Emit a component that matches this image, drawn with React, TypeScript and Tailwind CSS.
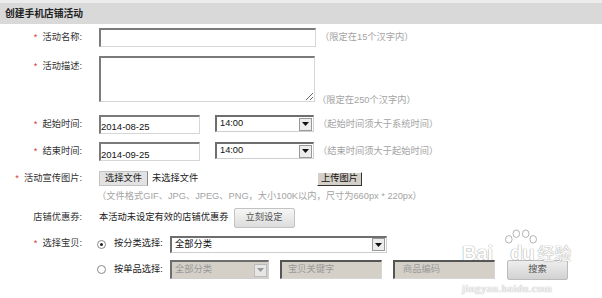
import React from 'react';

const inset =
  'border-t-2 border-l-2 border-r border-b border-t-[#7b7b7b] border-l-[#7b7b7b] border-r-[#d6d6d6] border-b-[#d6d6d6]';

const Star = () => <span className="text-[#d23a3a] mr-[5px]">*</span>;

const Arrow = ({ disabled }: { disabled?: boolean }) => (
  <span
    className={`w-[13px] h-[13px] mr-px flex items-center justify-center border ${
      disabled ? 'border-[#bbb] bg-[#e6e6e6]' : 'border-[#999] bg-[#ececec]'
    }`}
  >
    <svg width="7" height="4" viewBox="0 0 7 4">
      <path d="M0 0h7L3.5 4z" fill={disabled ? '#999' : '#111'} />
    </svg>
  </span>
);

const Select = ({ value, width, disabled }: { value: string; width: string; disabled?: boolean }) => (
  <div
    className={`flex items-center pl-[3px] ${width} ${
      disabled ? 'bg-[#d4d0c8] text-[#999] h-[19px]' : 'bg-white text-[#111] h-[17px]'
    } border-t-2 border-l-2 border-r border-b border-t-[#6e6e6e] border-l-[#6e6e6e] border-r-[#cfcfcf] border-b-[#cfcfcf]`}
  >
    <span className="flex-1 leading-none">{value}</span>
    <Arrow disabled={disabled} />
  </div>
);

const Label = ({ text, star }: { text: string; star?: boolean }) => (
  <div className="w-[82px] shrink-0 text-right text-[#333] whitespace-nowrap">
    {star && <Star />}
    {text}
  </div>
);

const Hint = ({ children }: { children: React.ReactNode }) => (
  <span className="text-[#a3a3a3] whitespace-nowrap">{children}</span>
);

const Radio = ({ checked }: { checked?: boolean }) => (
  <span className="w-[9px] h-[9px] -ml-[2px] rounded-full border border-[#888] bg-white flex items-center justify-center">
    {checked && <span className="w-[3px] h-[3px] rounded-full bg-[#222]" />}
  </span>
);

export default function App() {
  return (
    <div className="w-[602px] h-[298px] bg-white relative overflow-hidden font-['Liberation_Sans','Noto_Sans_CJK_SC',sans-serif] text-[9.25px] leading-none">
      <div className="h-[24px] bg-[#d9d9d9] border-t-[3px] border-[#ececec] flex items-center pl-[5px]">
        <span className="font-bold text-[9.75px] text-[#222]">创建手机店铺活动</span>
      </div>

      {/* 活动名称 */}
      <div className="flex items-center mt-[4px] h-[19px]">
        <Label text="活动名称:" star />
        <input readOnly className={`ml-[17px] w-[217px] h-[19px] bg-white outline-none ${inset}`} />
        <span className="ml-[4px]">
          <Hint>（限定在15个汉字内）</Hint>
        </span>
      </div>

      {/* 活动描述 */}
      <div className="flex items-start mt-[9px] h-[46px]">
        <div className="pt-[6px]">
          <Label text="活动描述:" star />
        </div>
        <textarea readOnly className={`ml-[17px] w-[216px] h-[46px] bg-white outline-none ${inset}`} />
        <span className="ml-[2px] self-end mb-[-3px]">
          <Hint>（限定在250个汉字内）</Hint>
        </span>
      </div>

      {/* 起始时间 */}
      <div className="flex items-center mt-[13px] h-[19px]">
        <Label text="起始时间:" star />
        <div className={`ml-[17px] w-[101px] h-[19px] bg-white flex items-end pb-[2px] text-[9.5px] text-[#111] ${inset}`}>
          2014-08-25
        </div>
        <div className="ml-[15px] self-start">
          <Select value="14:00" width="w-[99px]" />
        </div>
        <span className="ml-[4px]">
          <Hint>（起始时间须大于系统时间）</Hint>
        </span>
      </div>

      {/* 结束时间 */}
      <div className="flex items-center mt-[8px] h-[19px]">
        <Label text="结束时间:" star />
        <div className={`ml-[17px] w-[101px] h-[19px] bg-white flex items-end pb-[1px] text-[9.5px] text-[#111] ${inset}`}>
          2014-09-25
        </div>
        <div className="ml-[15px] self-start">
          <Select value="14:00" width="w-[99px]" />
        </div>
        <span className="ml-[4px]">
          <Hint>（结束时间须大于起始时间）</Hint>
        </span>
      </div>

      {/* 活动宣传图片 */}
      <div className="flex items-center mt-[9px] h-[17px]">
        <Label text="活动宣传图片:" star />
        <div className="ml-[17px] w-[218px] flex items-center">
          <span className="h-[15px] px-[5px] flex items-center bg-[#e2e2e2] border border-[#c4c4c4] border-r-[#888] text-[#222]">
            选择文件
          </span>
          <span className="ml-[4px] text-[#222]">未选择文件</span>
        </div>
        <span className="h-[14px] px-[3px] flex items-center bg-[#d4d0c8] border-t border-l border-white border-r border-b border-r-[#333] border-b-[#333] text-[#111]">
          上传图片
        </span>
      </div>

      {/* 文件格式 */}
      <div className="flex items-center mt-[3px] h-[14px]">
        <div className="w-[82px] shrink-0" />
        <span className="ml-[15px]">
          <Hint>（文件格式GIF、JPG、JPEG、PNG，大小100K以内，尺寸为660px * 220px）</Hint>
        </span>
      </div>

      {/* 店铺优惠券 */}
      <div className="flex items-center mt-[4px] h-[20px]">
        <Label text="店铺优惠券:" />
        <span className="ml-[17px] text-[#222]">本活动未设定有效的店铺优惠券</span>
        <span className="ml-[5px] w-[61px] h-[20px] flex items-center justify-center rounded-[2px] border border-[#c3c3c3] bg-gradient-to-b from-[#f7f7f7] to-[#dcdcdc] text-[#555]">
          立刻设定
        </span>
      </div>

      {/* 选择宝贝 */}
      <div className="flex items-center mt-[8px] h-[16px]">
        <Label text="选择宝贝:" star />
        <div className="ml-[17px] flex items-center">
          <Radio checked />
          <span className="ml-[8px] w-[56px] text-[#222]">按分类选择:</span>
          <Select value="全部分类" width="w-[217px]" />
        </div>
      </div>

      <div className="flex items-center mt-[8px] h-[19px]">
        <div className="w-[82px] shrink-0" />
        <div className="ml-[17px] flex items-center">
          <Radio />
          <span className="ml-[8px] w-[56px] text-[#222]">按单品选择:</span>
          <Select value="全部分类" width="w-[99px]" disabled />
          <div className={`ml-[11px] w-[102px] h-[19px] bg-[#d4d0c8] flex items-center pl-[6px] text-[#9a9a9a] ${inset} border-t-[#555] border-l-[#555]`}>
            宝贝关键字
          </div>
          <div className={`ml-[11px] w-[102px] h-[19px] bg-[#d4d0c8] flex items-center pl-[8px] text-[#9a9a9a] ${inset} border-t-[#555] border-l-[#555]`}>
            商品编码
          </div>
          <span className="ml-[12px] w-[61px] h-[20px] flex items-center justify-center rounded-[2px] border border-[#bbb] bg-gradient-to-b from-[#eee] to-[#d2d2d2] text-[#555]">
            搜索
          </span>
        </div>
      </div>

      {/* watermark */}
      <div className="absolute left-[462px] top-[229px] pointer-events-none flex flex-col items-start opacity-80">
        <svg width="34" height="15" viewBox="0 0 36 16" className="ml-[42px]">
          <g fill="#fff" stroke="#999" strokeWidth="1">
            <ellipse cx="5" cy="11" rx="3.5" ry="4" />
            <ellipse cx="13" cy="5" rx="3.5" ry="4" />
            <ellipse cx="23" cy="5" rx="3.5" ry="4" />
            <ellipse cx="31" cy="11" rx="3.5" ry="4" />
          </g>
        </svg>
        <div className="flex items-end gap-[3px] -mt-[1px] h-[20px]">
          <span className="text-[20px] font-bold text-white [text-shadow:0_0_1px_#888,0_0_1px_#888] font-['Liberation_Sans',sans-serif]">
            Bai
          </span>
          <span className="ml-[14px] text-[20px] font-bold text-white [text-shadow:0_0_1px_#888,0_0_1px_#888] font-['Liberation_Sans',sans-serif]">
            du
          </span>
          <span className="text-[17px] text-white [text-shadow:0_0_1px_#888,0_0_1px_#888]">经验</span>
        </div>
        <span className="mt-[20px] text-[11px] text-white tracking-[0.5px] [text-shadow:0_0_1px_#999,0_0_1px_#999] font-['Liberation_Serif',serif]">
          jingyan.baidu.com
        </span>
      </div>
    </div>
  );
}
